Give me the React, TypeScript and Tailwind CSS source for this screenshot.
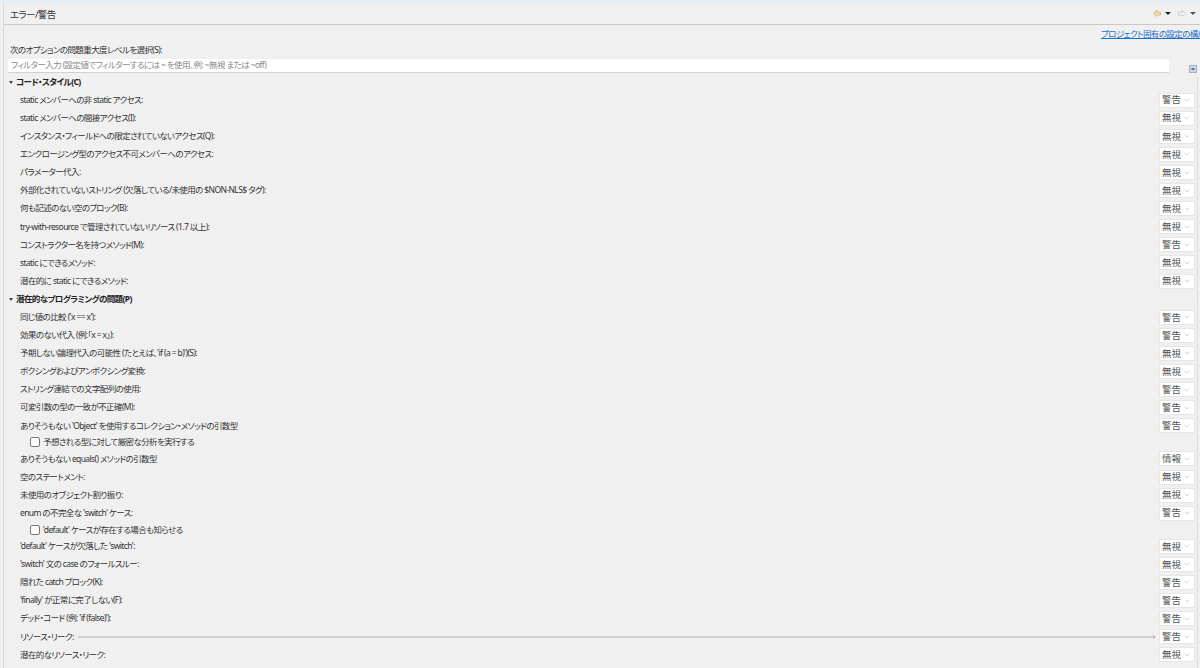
import React from 'react'
import { ChevronDown } from 'lucide-react'

type Row = { label: string, level: string, check?: string, line?: boolean }

const codeStyle: Row[] = [
    { label: "static メンバーへの非 static アクセス:", level: "警告" },
    { label: "static メンバーへの間接アクセス(I):", level: "無視" },
    { label: "インスタンス・フィールドへの限定されていないアクセス(Q):", level: "無視" },
    { label: "エンクロージング型のアクセス不可メンバーへのアクセス:", level: "無視" },
    { label: "パラメーター代入:", level: "無視" },
    { label: "外部化されていないストリング (欠落している/未使用の $NON-NLS$ タグ):", level: "無視" },
    { label: "何も記述のない空のブロック(B):", level: "無視" },
    { label: "try-with-resource で管理されていないリソース (1.7 以上):", level: "無視" },
    { label: "コンストラクター名を持つメソッド(M):", level: "警告" },
    { label: "static にできるメソッド:", level: "無視" },
    { label: "潜在的に static にできるメソッド:", level: "無視" },
]

const potential: Row[] = [
    { label: "同じ値の比較 ('x == x'):", level: "警告" },
    { label: "効果のない代入 (例:「x = x」):", level: "警告" },
    { label: "予期しない論理代入の可能性 (たとえば、'if (a = b)')(S):", level: "無視" },
    { label: "ボクシングおよびアンボクシング変換:", level: "無視" },
    { label: "ストリング連結での文字配列の使用:", level: "警告" },
    { label: "可変引数の型の一致が不正確(M):", level: "警告" },
    { label: "ありそうもない 'Object' を使用するコレクション・メソッドの引数型", level: "警告", check: "予想される型に対して厳密な分析を実行する" },
    { label: "ありそうもない equals() メソッドの引数型", level: "情報" },
    { label: "空のステートメント:", level: "無視" },
    { label: "未使用のオブジェクト割り振り:", level: "無視" },
    { label: "enum の不完全な 'switch' ケース:", level: "警告", check: "'default' ケースが存在する場合も知らせる" },
    { label: "'default' ケースが欠落した 'switch':", level: "無視" },
    { label: "'switch' 文の case のフォールスルー:", level: "無視" },
    { label: "隠れた catch ブロック(K):", level: "警告" },
    { label: "'finally' が正常に完了しない(F):", level: "警告" },
    { label: "デッド・コード (例: 'if (false)'):", level: "警告" },
    { label: "リソース・リーク:", level: "警告", line: true },
    { label: "潜在的なリソース・リーク:", level: "無視" },
]

function Select(props: { value: string }) {
    return (
        <div className='w-[36px] h-[15px] bg-white border border-[#e6e6e6] flex items-center justify-between pl-[2px] pr-[3px] tracking-normal'>
            <span className='text-[9.5px] leading-none text-[#555]'>{props.value}</span>
            <ChevronDown size={8} strokeWidth={1.3} color="#999" />
        </div>
    )
}

function OptionRow(props: { row: Row }) {
    const r = props.row
    return (
        <>
            <div className='h-[18.1px] flex items-center pl-[16px]'>
                <span className='whitespace-nowrap text-[#333]'>{r.label}</span>
                {r.line ?
                    <div className='flex-1 flex items-center ml-[4px] mr-[3px]'>
                        <div className='flex-1 h-[2px] bg-[#d0d0d0]' />
                        <div className='w-0 h-0 border-y-[2px] border-y-transparent border-l-[3px] border-l-[#bbb]' />
                    </div>
                    : <div className='flex-1' />}
                <Select value={r.level} />
            </div>
            {r.check &&
                <div className='h-[15px] flex items-center pl-[26px]'>
                    <div className='w-[10px] h-[10px] bg-white border border-[#777] rounded-[2px] mr-[3px]' />
                    <span className='whitespace-nowrap text-[#333]'>{r.check}</span>
                </div>}
        </>
    )
}

function Section(props: { title: string, rows: Row[] }) {
    return (
        <div>
            <div className='h-[18.1px] flex items-center pl-[5px]'>
                <div className='w-0 h-0 border-x-[2.5px] border-x-transparent border-t-[3px] border-t-[#444] mr-[3px]' />
                <span className='font-bold text-[#222]'>{props.title}</span>
            </div>
            {props.rows.map((r, i) => <OptionRow key={i} row={r} />)}
        </div>
    )
}

export default function App() {
    return (
        <div className='w-[1200px] h-[668px] overflow-hidden bg-[#f0f0f0] flex flex-col text-[8.5px] tracking-[-0.6px] leading-none [font-feature-settings:"palt"]'
            style={{ fontFamily: "'Noto Sans', 'Noto Sans CJK JP', sans-serif" }}>
            <div className='h-[3px] bg-[#e8edf3] shrink-0' />
            <div className='flex-1 flex flex-col ml-[3px] border-l border-[#d8d8d8] min-h-0'>
                <div className='h-[22px] shrink-0 flex items-center justify-between border-b border-[#c9c9c9] pl-[6px] pr-[4px]'>
                    <span className='text-[9.5px] text-[#333] mt-[2px]'>エラー/警告</span>
                    <div className='flex items-center gap-[4px]'>
                        <svg width="8" height="7" viewBox="0 0 8 7">
                            <path d="M0.5 3.5 L3.5 0.5 V2 H7.5 V5 H3.5 V6.5 Z" fill="#f3dcb0" stroke="#d9b56f" strokeWidth="0.8" />
                        </svg>
                        <div className='w-0 h-0 border-x-[3px] border-x-transparent border-t-[3px] border-t-[#222]' />
                        <svg width="8" height="7" viewBox="0 0 8 7" className='ml-[3px]'>
                            <path d="M7.5 3.5 L4.5 0.5 V2 H0.5 V5 H4.5 V6.5 Z" fill="#f4f4f4" stroke="#c8c8c8" strokeWidth="0.8" />
                        </svg>
                        <div className='w-0 h-0 border-x-[3px] border-x-transparent border-t-[3px] border-t-[#555]' />
                    </div>
                </div>
                <div className='h-[14px] shrink-0 flex items-center overflow-hidden mt-[2px]'>
                    <span className='whitespace-nowrap text-[#1a6fc9] underline pl-[1097px]'>プロジェクト固有の設定の構成...</span>
                </div>
                <div className='h-[12px] shrink-0 flex items-center pl-[6px] mt-[3px] text-[#333]'>次のオプションの問題重大度レベルを選択(S):</div>
                <div className='h-[14px] shrink-0 flex items-center mt-[3px]'>
                    <div className='w-[1161px] ml-[4px] h-[14px] bg-white border-b border-[#d0d0d0] flex items-center pl-[3px] text-[#888]'>
                        フィルター入力 (設定値でフィルターするには ~ を使用、例: ~無視 または ~off)
                    </div>
                    <div className='flex-1 flex justify-end pr-[3px] pt-[6px]'>
                        <svg width="8" height="8" viewBox="0 0 8 8">
                            <rect x="0.5" y="0.5" width="7" height="7" fill="#cdd9e6" stroke="#9fb2c6" />
                            <rect x="2.5" y="3" width="3" height="2" fill="#5a7894" />
                        </svg>
                    </div>
                </div>
                <div className='flex-1 flex min-h-0 overflow-hidden'>
                    <div className='flex-1 pr-[2px]'>
                        <Section title="コード・スタイル(C)" rows={codeStyle} />
                        <Section title="潜在的なプログラミングの問題(P)" rows={potential} />
                    </div>
                    <div className='w-[3px] border-l border-[#dedede] mt-[4px]' />
                </div>
            </div>
        </div>
    )
}
